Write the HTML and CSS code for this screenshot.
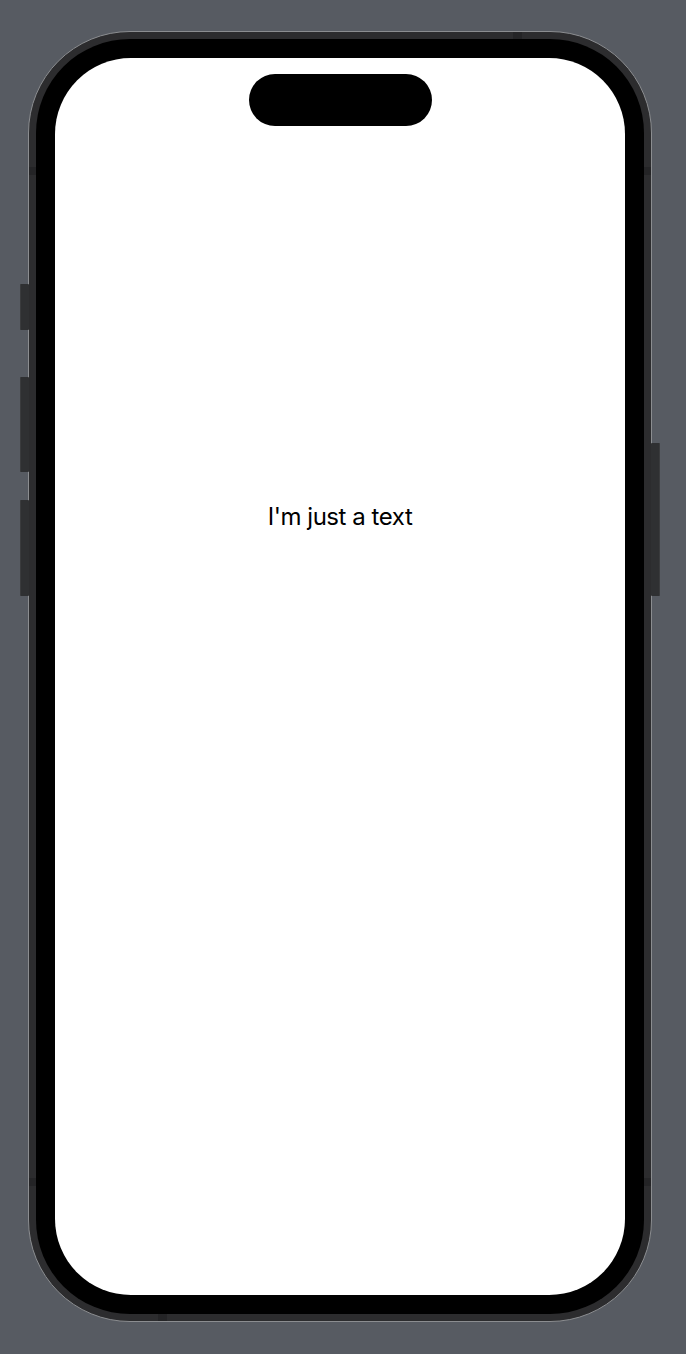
FILE: index.html
```html
<!DOCTYPE html>
<html>
<head>
<meta charset="utf-8">
<link rel="stylesheet" href="styles.css">
</head>
<body>
<div class="stage">
  <div class="phone">
    <span class="btn btn-action"></span>
    <span class="btn btn-vol-up"></span>
    <span class="btn btn-vol-down"></span>
    <span class="btn btn-power"></span>
    <span class="band band-top"></span>
    <span class="band band-bottom"></span>
    <span class="band band-lt"></span>
    <span class="band band-rt"></span>
    <span class="band band-lb"></span>
    <span class="band band-rb"></span>
    <div class="bezel">
      <div class="screen">
        <div class="island"></div>
        <p class="label">I'm just a text</p>
      </div>
    </div>
  </div>
</div>
</body>
</html>
```

FILE: styles.css
```css
html, body {
  margin: 0;
  padding: 0;
}
body {
  background: #575b62;
  width: 686px;
  height: 1354px;
  overflow: hidden;
}
.stage {
  padding: 31px 0 0 28px;
}
.phone {
  position: relative;
  box-sizing: border-box;
  width: 624px;
  height: 1291px;
  border: 1px solid #8b8d90;
  border-radius: 102px;
  background: #2c2c2e;
  padding: 7px;
}
.bezel {
  box-sizing: border-box;
  height: 100%;
  background: #000;
  border-radius: 94px;
  padding: 19px;
}
.screen {
  box-sizing: border-box;
  height: 100%;
  background: #fff;
  border-radius: 76px;
  display: flex;
  flex-direction: column;
  align-items: center;
  overflow: hidden;
}
.island {
  flex: none;
  width: 183px;
  height: 52px;
  margin-top: 16px;
  background: #000;
  border-radius: 26px;
}
.label {
  margin: 376px 0 0;
  font-family: Inter, "Liberation Sans", sans-serif;
  font-size: 24px;
  line-height: 29px;
  letter-spacing: -0.45px;
  color: #000;
}
.btn {
  position: absolute;
  width: 8px;
  background: #2f3032;
  border-radius: 1px;
}
.btn-action { left: -9px; top: 252px; height: 46px; border-left: 1px solid #3a3b3d; }
.btn-vol-up { left: -9px; top: 345px; height: 95px; border-left: 1px solid #3a3b3d; }
.btn-vol-down { left: -9px; top: 468px; height: 96px; border-left: 1px solid #3a3b3d; }
.btn-power { right: -9px; top: 411px; height: 153px; border-right: 1px solid #3a3b3d; }
.band {
  position: absolute;
  background: #242426;
}
.band-top { top: 0; left: 484px; width: 9px; height: 7px; }
.band-bottom { bottom: 0; left: 129px; width: 9px; height: 7px; }
.band-lt { left: 0; top: 135px; width: 7px; height: 8px; }
.band-rt { right: 0; top: 135px; width: 7px; height: 8px; }
.band-lb { left: 0; top: 1146px; width: 7px; height: 8px; }
.band-rb { right: 0; top: 1146px; width: 7px; height: 8px; }
```
